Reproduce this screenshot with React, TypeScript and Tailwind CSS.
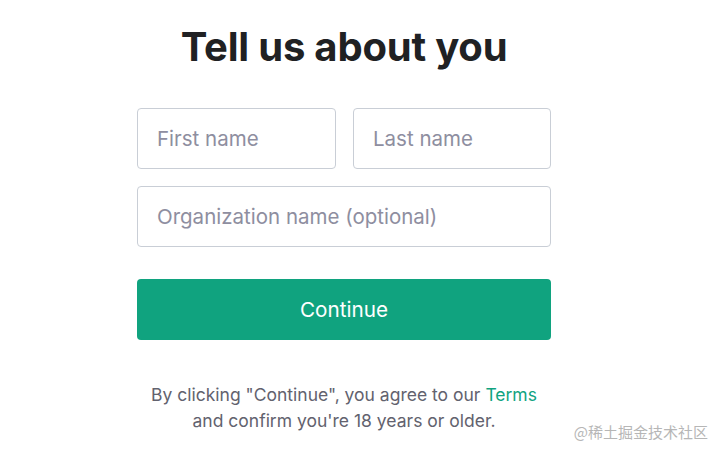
export default function App() {
  return (
    <div className="relative h-[455px] w-[720px] bg-white font-['Inter',sans-serif] text-[#2d333a]">
      <div className="ml-[137px] flex w-[414px] flex-col pt-[23px]">
        <h1 className="text-center text-[40px] font-bold leading-[47px] tracking-[-0.2px] text-[#202123]">
          Tell us about you
        </h1>
        <div className="mt-[38px] flex gap-[17px]">
          <input
            placeholder="First name"
            className="h-[61px] w-[199px] rounded-[4px] border border-[#c9ced6] px-[19px] text-[20.5px] outline-none placeholder:text-[#8e8ea0]"
          />
          <input
            placeholder="Last name"
            className="h-[61px] w-[198px] rounded-[4px] border border-[#c9ced6] px-[19px] text-[20.5px] outline-none placeholder:text-[#8e8ea0]"
          />
        </div>
        <input
          placeholder="Organization name (optional)"
          className="mt-[17px] h-[61px] w-full rounded-[4px] border border-[#c9ced6] px-[19px] text-[20.5px] outline-none placeholder:text-[#8e8ea0]"
        />
        <button
          type="button"
          className="mt-[32px] h-[61px] w-full rounded-[4px] bg-[#10a37f] text-[20.7px] text-white"
        >
          Continue
        </button>
        <p className="mt-[42px] text-center text-[17.5px] leading-[26px] text-[#62626e]">
          By clicking "Continue", you agree to our <span className="text-[#10a37f]">Terms</span>
          <br />
          and confirm you're 18 years or older.
        </p>
      </div>
      <div className="absolute bottom-[12px] right-[12px] font-['Noto_Sans_CJK_SC',sans-serif] text-[15px] text-[#b6b6b6]">
        @稀土掘金技术社区
      </div>
    </div>
  );
}
